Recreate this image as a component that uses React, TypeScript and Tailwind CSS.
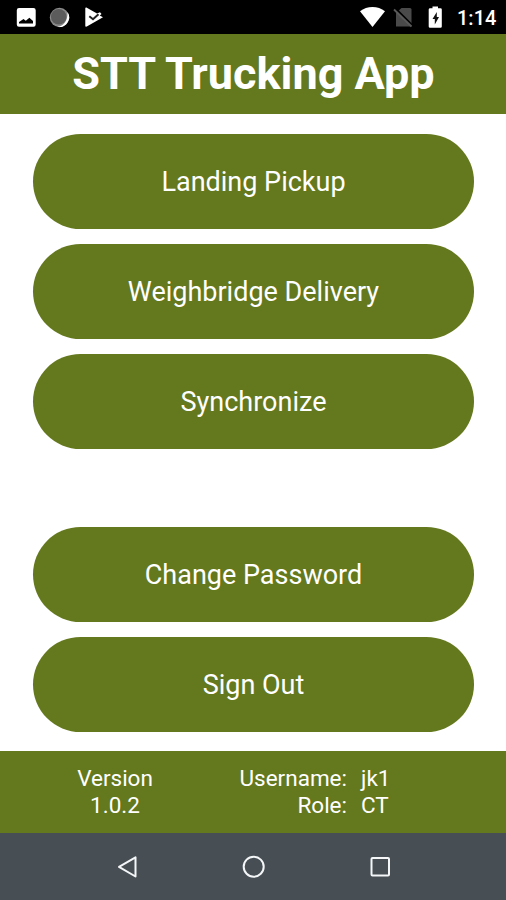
import type { ReactNode } from "react";

function StatusBar() {
  return (
    <div className="flex h-[34px] items-center justify-between bg-black">
      <svg width="130" height="34" viewBox="0 0 130 34">
        <path
          fill="#fff"
          fillRule="evenodd"
          d="M19 8h14.500a2.200 2.200 0 0 1 2.200 2.200v14.300a2.200 2.200 0 0 1-2.200 2.200H19a2.200 2.200 0 0 1-2.200-2.200V10.200A2.200 2.200 0 0 1 19 8ZM19 23.500h14v-2.500l-3.600-3.200-3.600 3-2.300-1.700L19 22Z"
        />
        <circle cx="59.500" cy="17.500" r="9.700" fill="#8b8b8b" />
        <path d="M67.500 12a9.700 9.700 0 0 1-10.500 14.700c6 0 11-5.500 10.500-14.700Z" fill="#fff" />
        <circle cx="58.700" cy="16.700" r="7.800" fill="#5c5c5c" />
        <path
          fill="#fff"
          d="M85.300 8.500c0-.8.800-1.200 1.500-.8L97 13.500l3-1.300 1.500 1.800-1.700 1.600L103 17.200 86.800 26.600c-.7.400-1.500 0-1.500-.8Z"
        />
        <path d="M89.300 16.200l3.700 3 5.500-5" fill="none" stroke="#222" strokeWidth="2" />
      </svg>
      <div className="flex items-center">
        <svg width="96" height="34" viewBox="358 0 96 34">
          <path d="M360 11.300c7-5.700 18-5.700 25 0L372.500 27Z" fill="#fff" />
          <path d="M401.500 8H410a1.500 1.500 0 0 1 1.500 1.500v17H396V13Z" fill="#4a4a4a" />
          <path d="M395.500 8.500l17 17" stroke="#000" strokeWidth="2" />
          <path d="M394 9.500l17.500 17" stroke="#5a5a5a" strokeWidth="1.800" />
          <path
            d="M432.500 6.500h5.500v1.700h2.500a1.300 1.300 0 0 1 1.300 1.300v17a1.300 1.300 0 0 1-1.300 1.300H430a1.300 1.300 0 0 1-1.300-1.300v-17a1.300 1.300 0 0 1 1.300-1.300h2.500Z"
            fill="#fff"
          />
          <path d="M436.800 12l-4.300 7h2.300v5.500l4.200-7.500h-2.200Z" fill="#111" />
        </svg>
        <span className="w-[52px] pt-px pl-[3px] text-[20px] leading-[34px] font-medium text-white">
          1:14
        </span>
      </div>
    </div>
  );
}

function MenuButton({ children }: { children: ReactNode }) {
  return (
    <button className="h-[95px] w-full rounded-full bg-[#64781d] pt-px text-[27px] text-white">
      {children}
    </button>
  );
}

function NavBar() {
  return (
    <div className="flex h-[67px] items-center justify-center bg-[#474f55]">
      <svg width="300" height="67" viewBox="103 833 300 67" fill="none" stroke="#f4f6f7" strokeWidth="2">
        <path d="M135.500 857.300v19.200L119 866.900Z" strokeLinejoin="round" />
        <circle cx="253.700" cy="866.700" r="10" />
        <rect x="371.500" y="858" width="17.500" height="17.500" rx="1" />
      </svg>
    </div>
  );
}

export default function App() {
  return (
    <div className="flex h-[900px] w-[506px] flex-col bg-white font-['Roboto',sans-serif]">
      <StatusBar />
      <header className="flex h-[80px] items-center justify-center bg-[#64781d]">
        <h1 className="pl-px text-[45px] font-bold text-white">STT Trucking App</h1>
      </header>
      <main className="flex flex-1 flex-col gap-[15px] pt-5 pr-8 pl-[33px]">
        <MenuButton>Landing Pickup</MenuButton>
        <MenuButton>Weighbridge Delivery</MenuButton>
        <MenuButton>Synchronize</MenuButton>
        <div className="mt-[63px] flex flex-col gap-[15px]">
          <MenuButton>Change Password</MenuButton>
          <MenuButton>Sign Out</MenuButton>
        </div>
      </main>
      <footer className="flex h-[82px] bg-[#64781d] pt-[14px] text-[22.500px] leading-[27px] text-white">
        <div className="w-[230px] text-center">
          <p>Version</p>
          <p>1.0.2</p>
        </div>
        <div className="w-[117px] text-right">
          <p>Username:</p>
          <p>Role:</p>
        </div>
        <div className="pl-[14px]">
          <p>jk1</p>
          <p>CT</p>
        </div>
      </footer>
      <NavBar />
    </div>
  );
}
